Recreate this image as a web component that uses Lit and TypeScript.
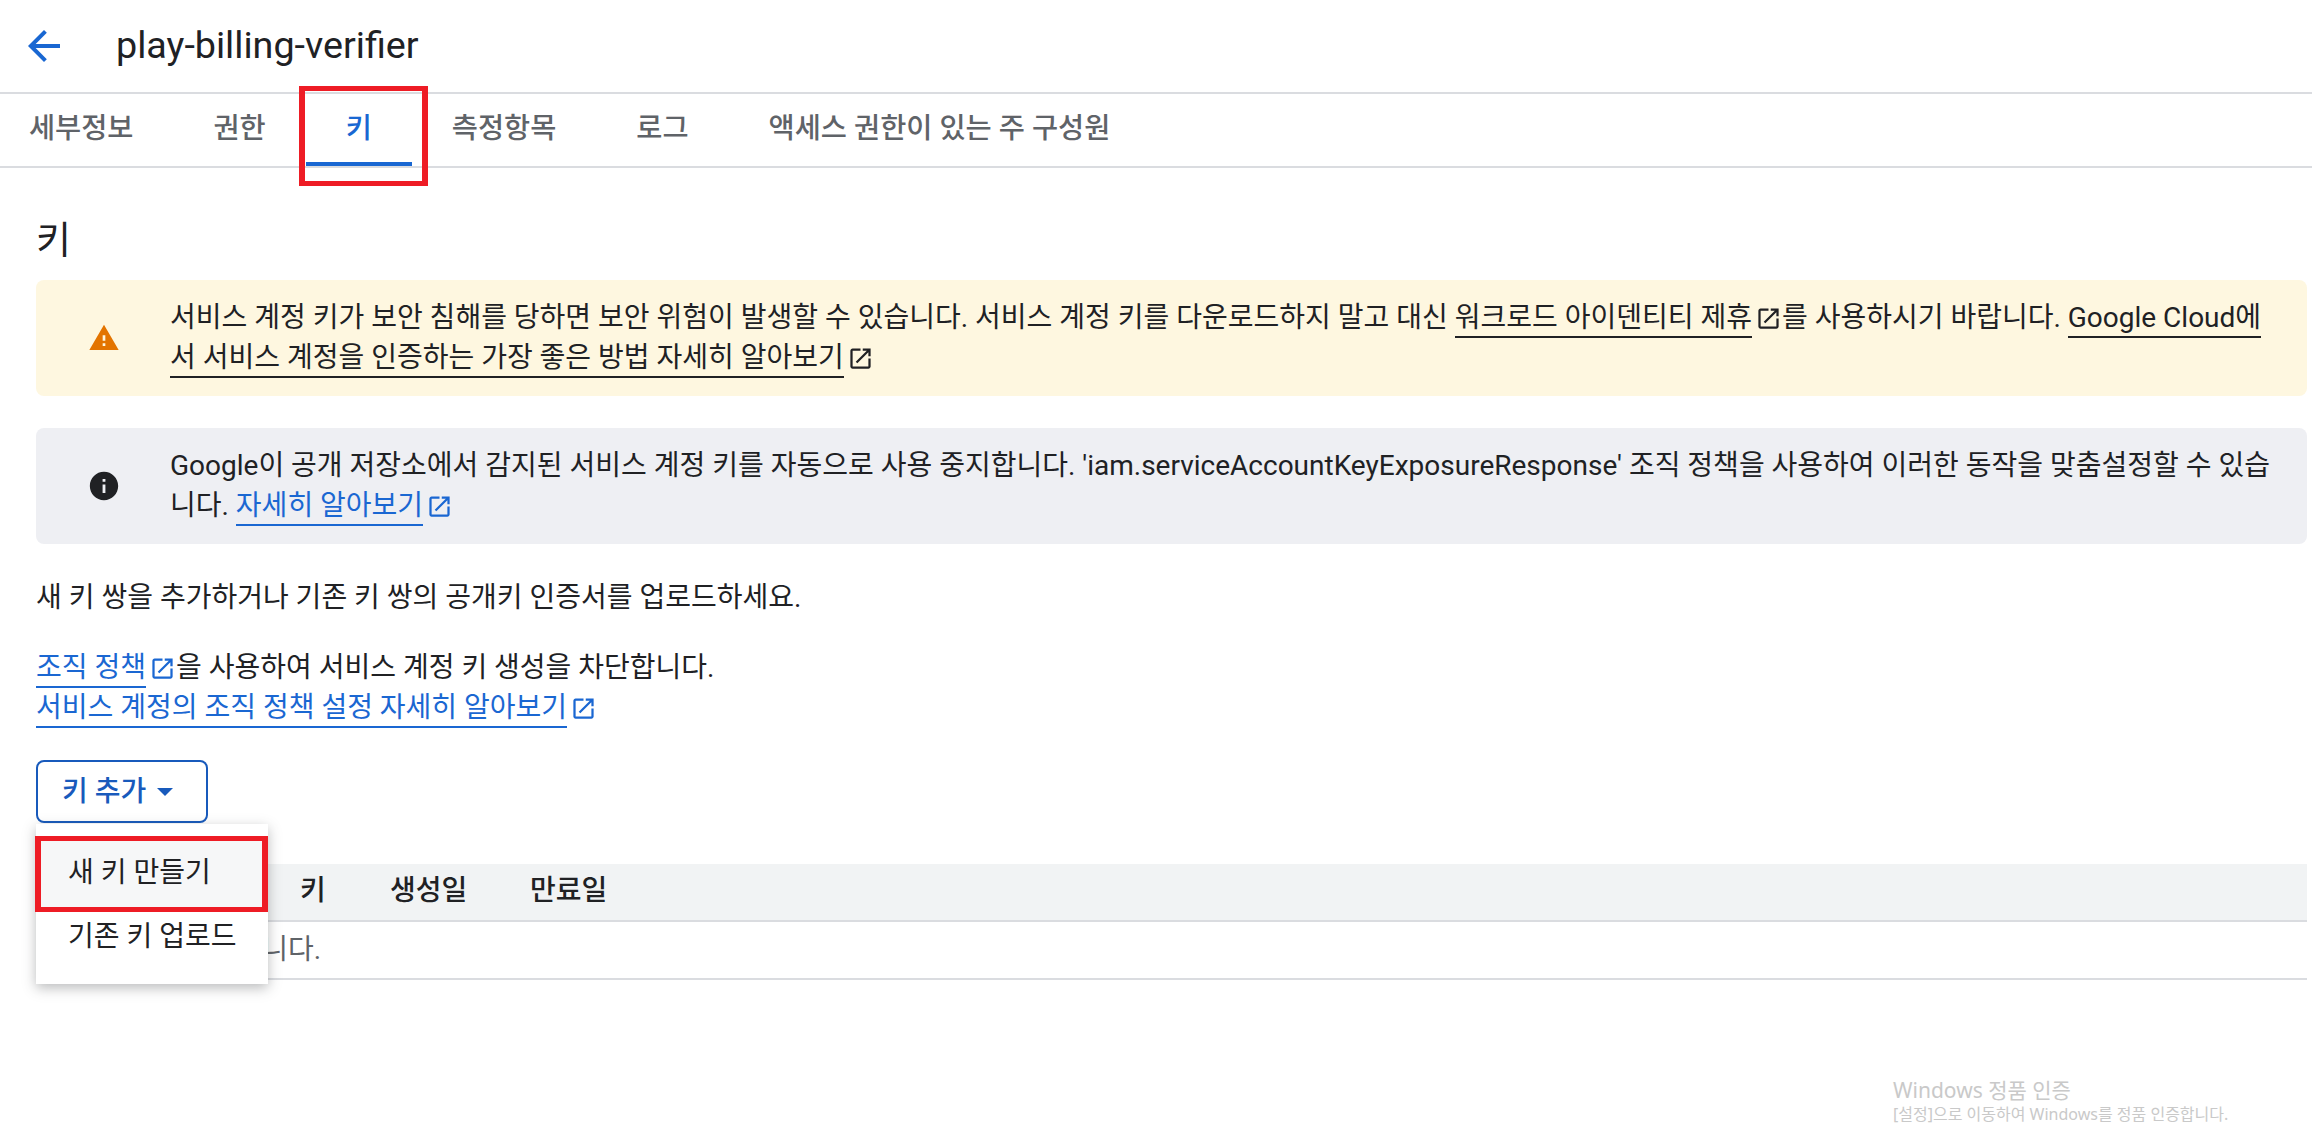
import { LitElement, css, html, svg } from 'lit';
import { customElement } from 'lit/decorators.js';

const openIcon = html`<svg class="ext" viewBox="0 0 24 24" fill="currentColor">
  <path d="M19 19H5V5h7V3H5c-1.11 0-2 .9-2 2v14c0 1.1.89 2 2 2h14c1.1 0 2-.9 2-2v-7h-2v7zM14 3v2h3.59l-9.83 9.83 1.41 1.41L19 6.41V10h2V3h-7z"></path>
</svg>`;

const TABS = ['세부정보', '권한', '키', '측정항목', '로그', '액세스 권한이 있는 주 구성원'];

@customElement('app-root')
export class AppRoot extends LitElement {
  static styles = css`
    :host {
      display: block;
      position: relative;
      height: 1134px;
      overflow: hidden;
      background: #fff;
      color: #202124;
      font-family: Roboto, "Noto Sans CJK KR", sans-serif;
      font-size: 28px;
      line-height: 40px;
    }

    a {
      color: inherit;
      text-decoration: none;
    }

    .ext {
      display: inline-block;
      width: 27px;
      height: 27px;
      margin-left: 3px;
      vertical-align: -5px;
    }

    .header {
      display: flex;
      align-items: center;
      gap: 48px;
      height: 92px;
      padding-left: 20px;
      border-bottom: 2px solid #dadce0;
    }

    .back {
      width: 48px;
      height: 48px;
      fill: #1967d2;
    }

    .title {
      font-size: 37.7px;
      margin-top: -2px;
    }

    .tabs {
      display: flex;
      height: 72px;
      border-bottom: 2px solid #dadce0;
      padding-left: 29px;
    }

    .tab {
      box-sizing: border-box;
      height: 72px;
      padding: 0 40px;
      font-size: 28.4px;
      line-height: 70px;
      font-weight: 500;
      color: #5f6368;
      white-space: nowrap;
      border-bottom: 4px solid transparent;
    }

    .tab:first-child {
      margin-left: -40px;
    }

    .tab.active {
      color: #1967d2;
      border-bottom-color: #1967d2;
    }

    .main {
      padding: 0 5px 0 36px;
    }

    h1 {
      margin: 0;
      padding-top: 48px;
      height: 64px;
      font-size: 38px;
      line-height: 48px;
      font-weight: 400;
    }

    .notice {
      display: flex;
      align-items: center;
      gap: 50px;
      margin-bottom: 32px;
      padding: 18px 16px 18px 52px;
      border-radius: 8px;
    }

    .notice svg.lead {
      flex: none;
      width: 32px;
      height: 32px;
    }

    .warn {
      background: #fef7e0;
    }

    .warn .lead {
      fill: #e37400;
    }

    .info {
      background: #eeeff3;
    }

    .notice.info svg.lead {
      width: 34px;
      height: 34px;
      margin: 0 -1px;
      fill: #202124;
    }

    .u {
      border-bottom: 2px solid currentColor;
      padding-bottom: 2px;
    }

    .link {
      color: #1a67d2;
    }

    p {
      margin: 0;
    }

    .intro {
      padding-top: 2px;
      margin-bottom: 30px;
    }

    .btn-wrap {
      position: relative;
      margin-top: 32px;
    }

    .add {
      box-sizing: border-box;
      display: inline-flex;
      align-items: center;
      gap: 11px;
      height: 63px;
      width: 172px;
      padding-left: 24px;
      border: 2px solid #185abc;
      border-radius: 8px;
      color: #185abc;
      font-weight: 500;
    }

    .caret {
      width: 0;
      height: 0;
      border-left: 8px solid transparent;
      border-right: 8px solid transparent;
      border-top: 8px solid #185abc;
    }

    .menu {
      position: absolute;
      left: 0;
      top: 64px;
      width: 232px;
      height: 160px;
      padding-top: 12px;
      box-sizing: border-box;
      background: #fff;
      box-shadow: 0 4px 12px rgba(60, 64, 67, 0.35);
      z-index: 2;
    }

    .menu div {
      height: 50px;
      line-height: 50px;
      padding-left: 32px;
      white-space: nowrap;
    }

    .menu .hover {
      box-sizing: border-box;
      height: 76px;
      line-height: 64px;
      margin-left: -1px;
      padding-left: 27px;
      border-style: solid;
      border-color: #ee1c25;
      border-width: 5px 6px;
      background: #f6f7f8;
    }

    .table {
      margin-top: 41px;
    }

    .thead {
      display: flex;
      height: 56px;
      background: #f1f3f4;
      border-bottom: 2px solid #dadce0;
      line-height: 54px;
      font-weight: 500;
    }

    .thead span:nth-child(1) {
      margin-left: 264px;
      width: 90px;
    }

    .thead span:nth-child(2) {
      width: 140px;
    }

    .tbody {
      height: 56px;
      padding-left: 32px;
      border-bottom: 2px solid #dadce0;
      line-height: 56px;
      color: #5f6368;
    }

    .mark {
      position: absolute;
      left: 299px;
      top: 86px;
      width: 129px;
      height: 100px;
      box-sizing: border-box;
      border-style: solid;
      border-color: #ee1c25;
      border-width: 5px 6px;
    }

    .watermark {
      position: absolute;
      left: 1893px;
      top: 1076px;
      color: #c9c9c9;
      font-family: "Noto Sans", "Noto Sans CJK KR", sans-serif;
      font-size: 21px;
      line-height: 28px;
    }

    .watermark small {
      display: block;
      font-size: 16px;
      line-height: 20px;
    }
  `;

  render() {
    return html`
      <div class="header">
        <svg class="back" viewBox="0 0 24 24"><path d="M20 11H7.83l5.59-5.59L12 4l-8 8 8 8 1.41-1.41L7.83 13H20v-2z"></path></svg>
        <div class="title">play-billing-verifier</div>
      </div>
      <div class="tabs">
        ${TABS.map((t) => html`<div class="tab ${t === '키' ? 'active' : ''}">${t}</div>`)}
      </div>
      <div class="mark"></div>
      <div class="main">
        <h1>키</h1>
        <div class="notice warn">
          <svg class="lead" viewBox="0 0 24 24">${svg`<path d="M1 21h22L12 2 1 21zm12-3h-2v-2h2v2zm0-4h-2v-4h2v4z"></path>`}</svg>
          <div>
            서비스 계정 키가 보안 침해를 당하면 보안 위험이 발생할 수 있습니다. 서비스 계정 키를 다운로드하지 말고 대신
            <a class="u" href="#">워크로드 아이덴티티 제휴</a>${openIcon}를 사용하시기 바랍니다.
            <a class="u" href="#">Google Cloud에<br />서 서비스 계정을 인증하는 가장 좋은 방법 자세히 알아보기</a>${openIcon}
          </div>
        </div>
        <div class="notice info">
          <svg class="lead" viewBox="0 0 24 24">${svg`<path d="M12 2C6.48 2 2 6.48 2 12s4.48 10 10 10 10-4.48 10-10S17.52 2 12 2zm1 15h-2v-6h2v6zm0-8h-2V7h2v2z"></path>`}</svg>
          <div>
            Google이 공개 저장소에서 감지된 서비스 계정 키를 자동으로 사용 중지합니다. 'iam.serviceAccountKeyExposureResponse' 조직 정책을 사용하여 이러한 동작을 맞춤설정할 수 있습<br />니다.
            <a class="u link" href="#">자세히 알아보기</a><span class="link">${openIcon}</span>
          </div>
        </div>
        <p class="intro">새 키 쌍을 추가하거나 기존 키 쌍의 공개키 인증서를 업로드하세요.</p>
        <p>
          <a class="u link" href="#">조직 정책</a><span class="link">${openIcon}</span>을 사용하여 서비스 계정 키 생성을 차단합니다.<br />
          <a class="u link" href="#">서비스 계정의 조직 정책 설정 자세히 알아보기</a><span class="link">${openIcon}</span>
        </p>
        <div class="btn-wrap">
          <div class="add">키 추가 <span class="caret"></span></div>
          <div class="menu">
            <div class="hover">새 키 만들기</div>
            <div>기존 키 업로드</div>
          </div>
        </div>
        <div class="table">
          <div class="thead"><span>키</span><span>생성일</span><span>만료일</span></div>
          <div class="tbody">표시할 행이 없습니다.</div>
        </div>
      </div>
      <div class="watermark">Windows 정품 인증<small>[설정]으로 이동하여 Windows를 정품 인증합니다.</small></div>
    `;
  }
}
